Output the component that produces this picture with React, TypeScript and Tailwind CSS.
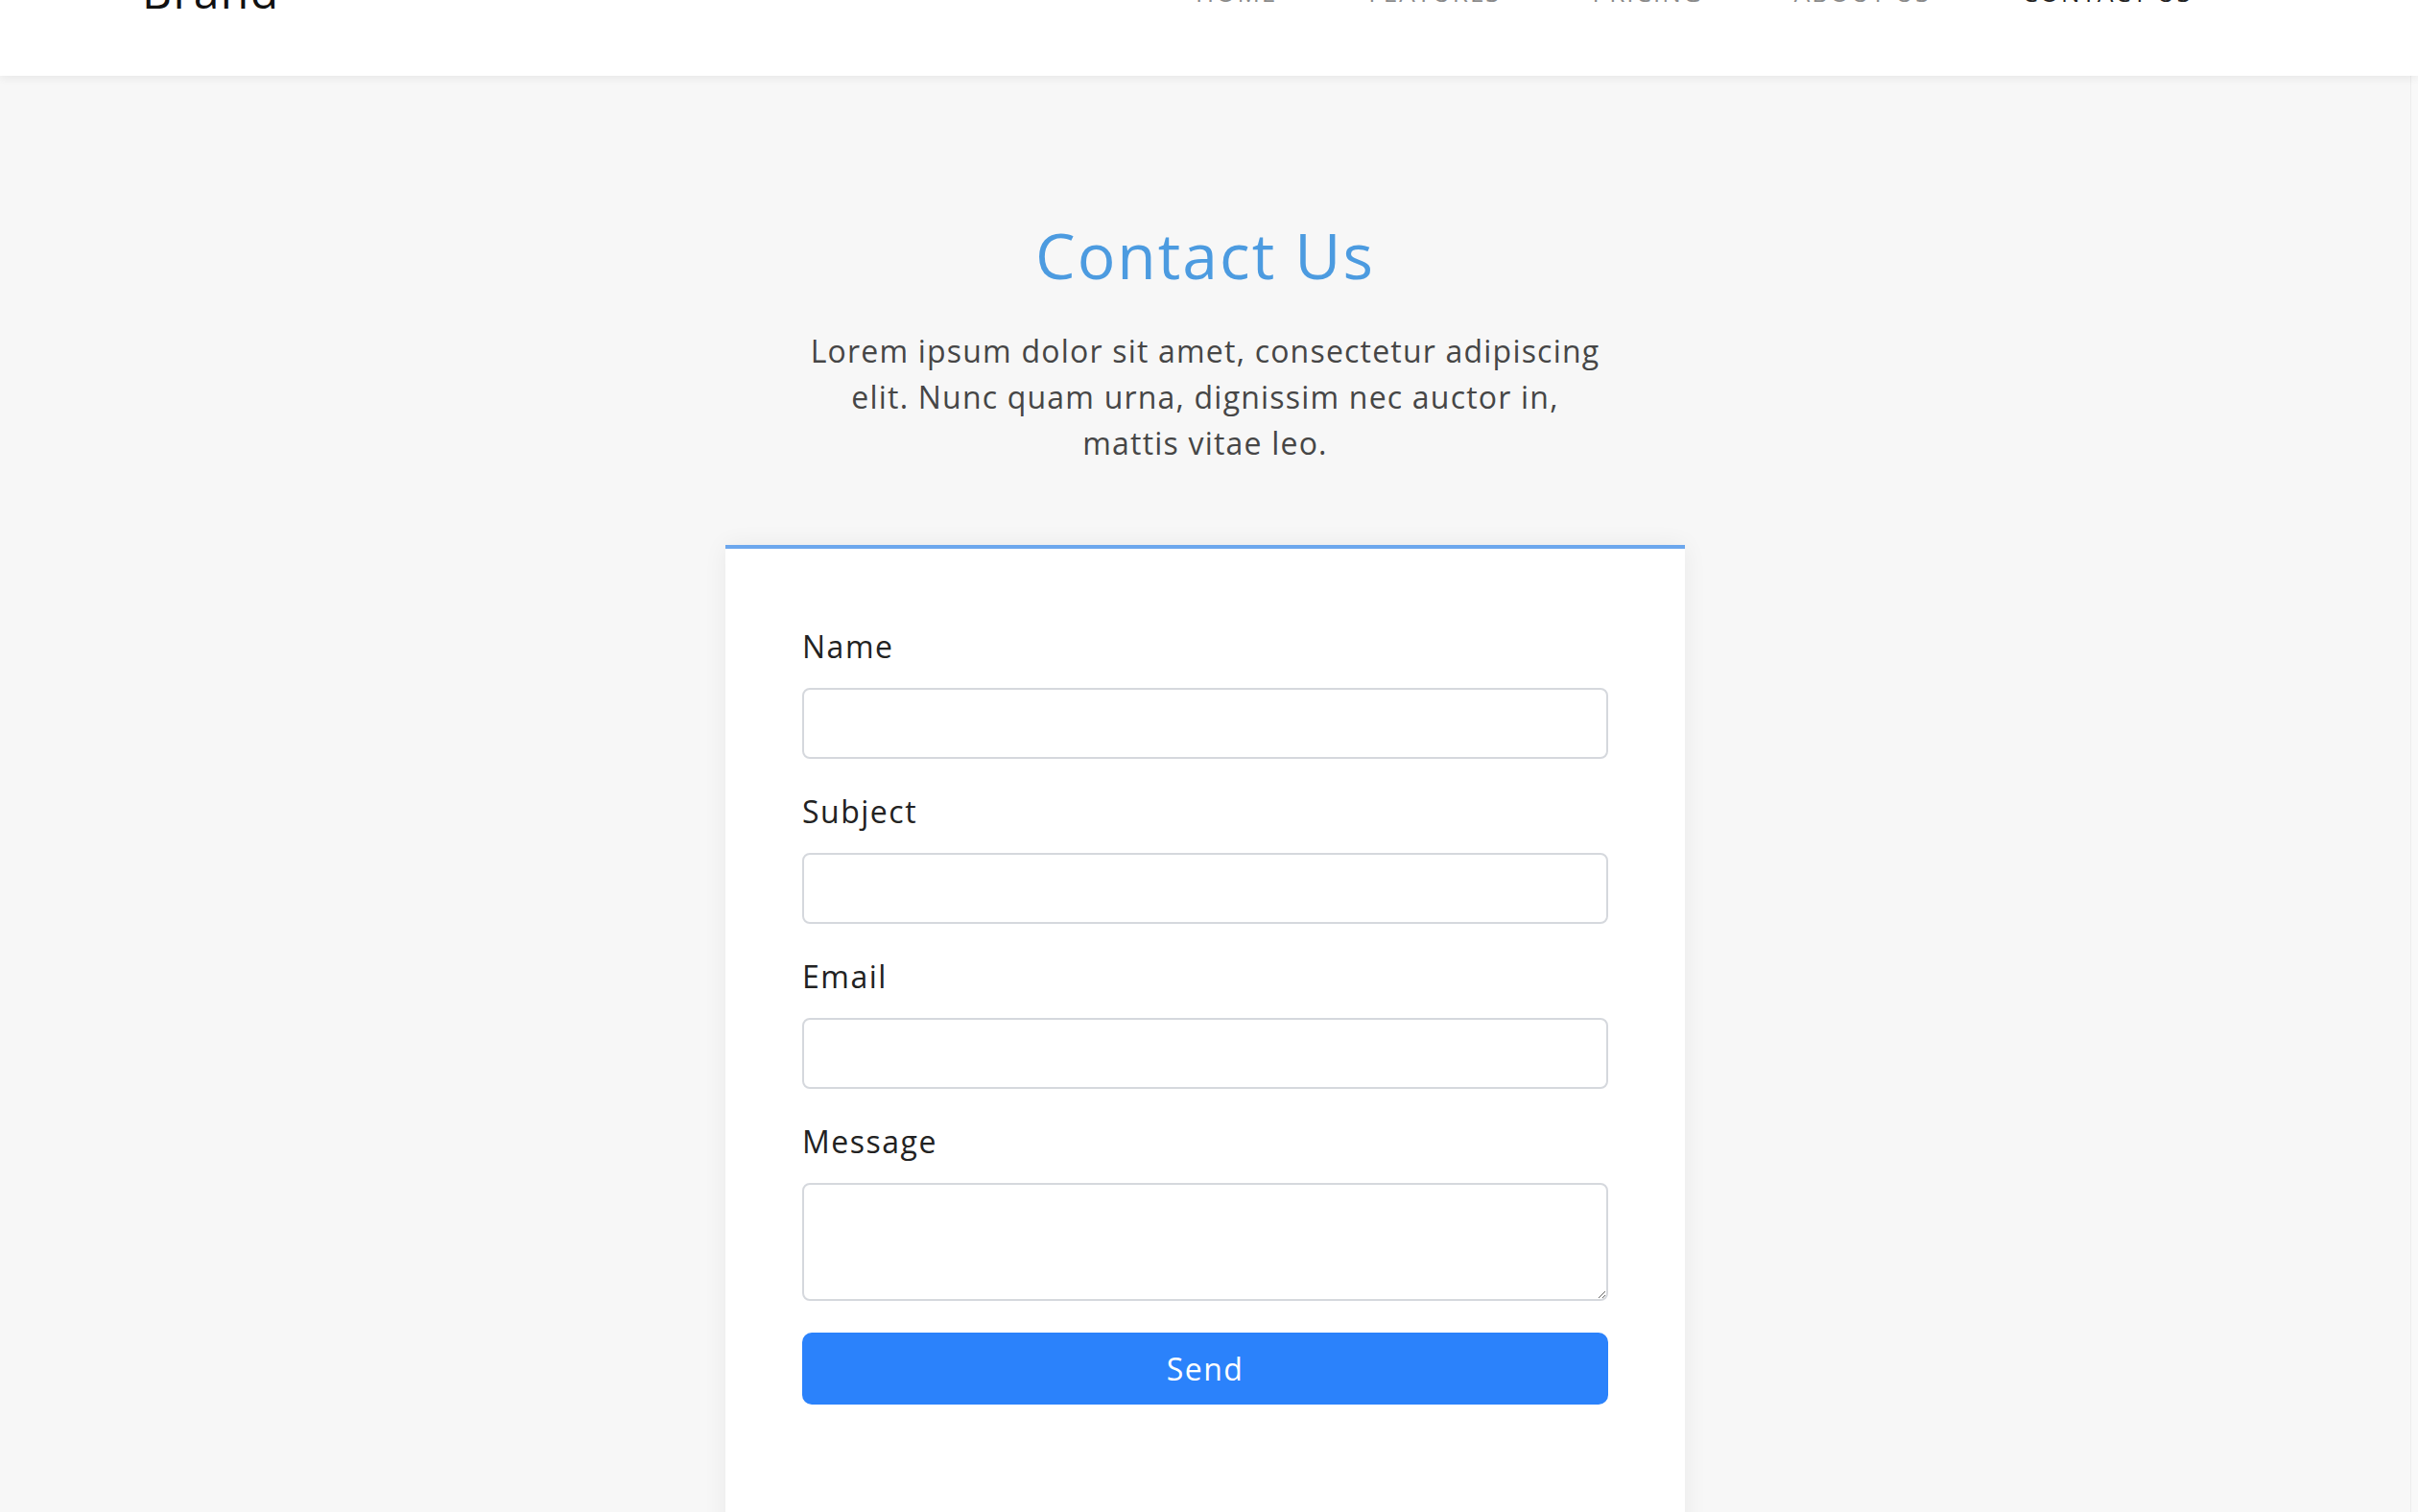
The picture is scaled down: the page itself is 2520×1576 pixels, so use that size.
import React from 'react';

const links = ['HOME', 'FEATURES', 'PRICING', 'ABOUT US', 'CONTACT US'];

const Field = ({ label, area }: { label: string; area?: boolean }) => (
  <div className="flex flex-col">
    <label className="text-[32px] leading-[48px] tracking-[1.5px] text-[#222] mb-[19px]">{label}</label>
    {area ? (
      <textarea className="block w-full h-[123px] border-2 border-[#d5d8dd] rounded-[8px] bg-white outline-none" />
    ) : (
      <input className="block w-full h-[74px] border-2 border-[#d5d8dd] rounded-[8px] bg-white outline-none" />
    )}
  </div>
);

export default function App() {
  return (
    <div className="h-[1576px] overflow-hidden bg-[#f7f7f7] font-['Open_Sans',sans-serif]">
      <header className="relative z-10 h-[79px] bg-white shadow-[0_2px_10px_rgba(0,0,0,0.07)] overflow-hidden">
        <div className="flex items-start justify-between pl-[148px] pr-[235px]">
          <div className="text-[48px] leading-[48px] tracking-[1.5px] -mt-[33px] text-[#111]">Brand</div>
          <nav className="flex gap-[95px] -mt-[21px]">
            {links.map((l) => (
              <a
                key={l}
                className={
                  'text-[26px] leading-[26px] tracking-[2px] ' +
                  (l === 'CONTACT US' ? 'text-[#222]' : 'text-[#8a8a8a]')
                }
              >
                {l}
              </a>
            ))}
          </nav>
        </div>
      </header>

      <div className="flex h-full">
        <main className="flex-1 flex flex-col items-center pt-[147px]">
          <h1 className="text-[66px] leading-[1.2] tracking-[2px] text-[#4c9be0] font-normal">Contact Us</h1>
          <p className="mt-[37px] text-[32px] leading-[48px] tracking-[1.2px] text-[#464646] text-center">
            Lorem ipsum dolor sit amet, consectetur adipiscing
            <br />
            elit. Nunc quam urna, dignissim nec auctor in,
            <br />
            mattis vitae leo.
          </p>

          <div className="mt-[82px] w-[1000px] bg-white border-t-4 border-[#6ca7ed] shadow-[0_0_24px_rgba(0,0,0,0.06)] px-[80px] pt-[78px] pb-[300px]">
            <form className="flex flex-col gap-[31px]">
              <Field label="Name" />
              <Field label="Subject" />
              <Field label="Email" />
              <Field label="Message" area />
            </form>
            <button className="mt-[33px] w-full h-[75px] rounded-[10px] bg-[#2b82fb] text-white text-[32px] tracking-[1.5px]">
              Send
            </button>
          </div>
        </main>
        <div className="w-[8px] border-l border-[#ededed] bg-[#f9f9f9]" />
      </div>
    </div>
  );
}
